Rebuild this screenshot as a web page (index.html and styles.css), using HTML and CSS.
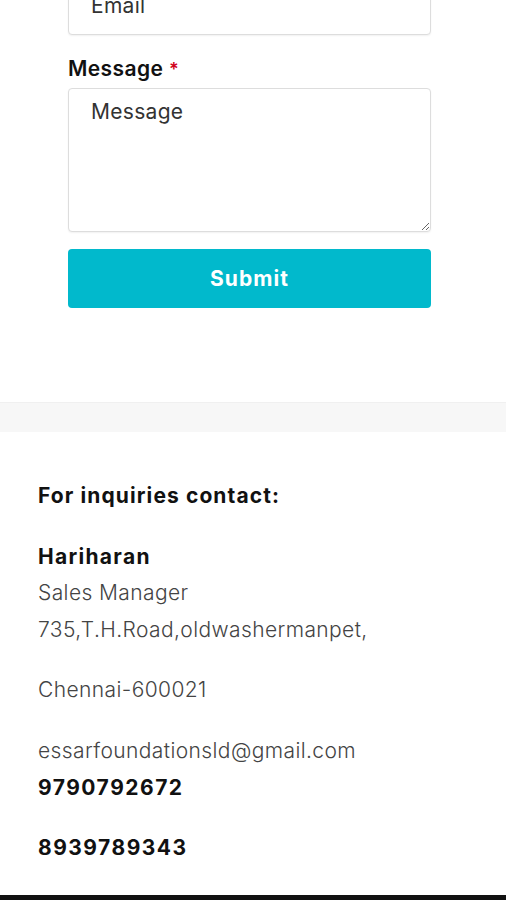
FILE: index.html
```html
<!DOCTYPE html>
<html>
<head>
<meta charset="utf-8">
<link rel="stylesheet" href="styles.css">
</head>
<body>
<section class="form-section">
  <form class="form">
    <input class="field email" type="text" placeholder="Email">
    <label class="label">Message <span class="req">*</span></label>
    <textarea class="field message" placeholder="Message"></textarea>
    <button class="submit" type="button">Submit</button>
  </form>
</section>
<div class="band"></div>
<section class="contact">
  <p class="heading">For inquiries contact:</p>
  <p><b>Hariharan</b><br>Sales Manager<br>735,T.H.Road,oldwashermanpet,</p>
  <p>Chennai-600021</p>
  <p>essarfoundationsld@gmail.com<br><b class="phone">9790792672</b></p>
  <p><b class="phone">8939789343</b></p>
</section>
<footer class="footer"></footer>
</body>
</html>
```
FILE: styles.css
```css
html, body { margin: 0; padding: 0; background: #fff; }
body { font-family: Inter, "Noto Sans", sans-serif; color: #111; overflow: hidden; height: 900px; }
.form-section { height: 402px; }
.form { width: 363px; margin: 0 0 0 68px; display: flex; flex-direction: column; }
.field {
  box-sizing: border-box; width: 100%; border: 1px solid #ddd; border-radius: 4px;
  font-family: inherit; font-size: 21px; letter-spacing: 0.3px; color: #333; padding: 0 22px; background: #fff;
  box-shadow: 0 1px 2px rgba(0,0,0,0.06);
}
.field::placeholder { color: #333; }
.email { height: 60px; margin-top: -25px; padding-top: 0; }
.label { margin-top: 20px; font-size: 21px; font-weight: 600; letter-spacing: 0.4px; line-height: 28px; color: #111; }
.req { color: #d0021b; font-size: 18px; }
.message { margin-top: 4px; height: 144px; resize: vertical; padding-top: 9px; line-height: 28px; }
.submit {
  margin-top: 17px; height: 59px; border: 0; border-radius: 4px; background: #01b9cc;
  color: #fff; font-family: inherit; font-size: 21px; font-weight: 700; letter-spacing: 1.1px;
}
.band { height: 30px; background: #f7f7f7; border-top: 1px solid #f0f0f0; box-sizing: border-box; }
.contact { padding: 46px 0 0 38px; font-size: 21px; line-height: 36.6px; color: #444; font-weight: 300; letter-spacing: 0.4px; }
.contact p { margin: 0 0 24px; }
.contact b { color: #111; font-weight: 700; letter-spacing: 1.3px; }
.contact .heading { color: #111; font-weight: 700; letter-spacing: 1.1px; }
.contact .phone { letter-spacing: 1.5px; }
.footer { height: 10px; background: #111; position: absolute; left: 0; right: 0; top: 895px; }
```
